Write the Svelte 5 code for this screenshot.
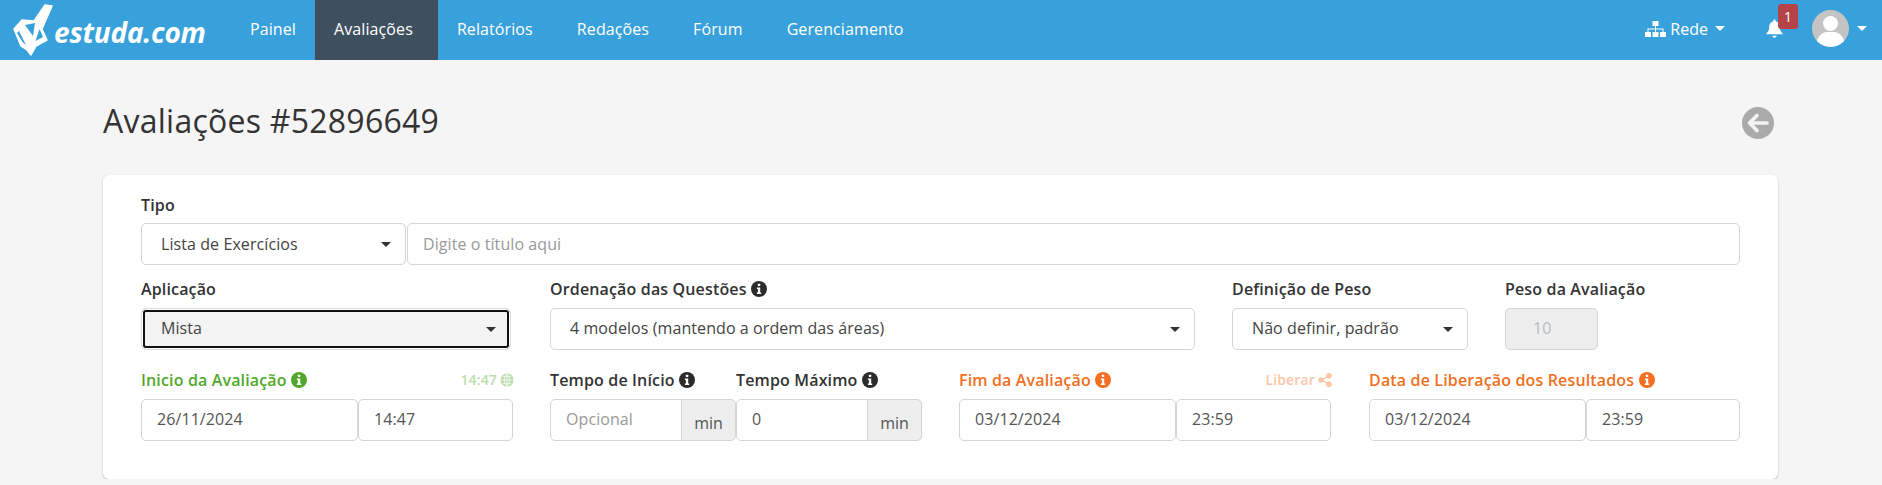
<script>
	const nav = ['Painel', 'Avaliações', 'Relatórios', 'Redações', 'Fórum', 'Gerenciamento'];
	const active = 'Avaliações';
</script>

{#snippet info(color)}
	<svg class="info" viewBox="0 0 16 16" style="color: {color}">
		<circle cx="8" cy="8" r="8" fill="currentColor" />
		<rect x="6.9" y="2.8" width="2.3" height="2.3" rx="0.4" fill="#fff" />
		<path d="M5.9 6.5h3.3v5h1v1.6H5.900v-1.600h1v-3.400h-1z" fill="#fff" />
	</svg>
{/snippet}

{#snippet caret()}
	<span class="caret"></span>
{/snippet}

<header class="navbar">
	<div class="logo">
		<svg class="logo-mark" viewBox="0 0 54 56" width="54" height="56">
			<path
				d="M14 27 L22 18 L34 19 L45 3 L52 4 L42 27 L47 38 L36 44 L31 53 L27 48 L21 44 Z"
				fill="#fff"
				stroke="#fff"
				stroke-width="1.500"
				stroke-linejoin="round"
			/>
			<path d="M25 23 L35 21 L33 34 Z" fill="#38a1db" />
			<path d="M19 29 L26 43 L22.500 40 L17 31 Z" fill="#38a1db" />
			<path d="M35.500 39 L43 35 L39.500 27 Z" fill="#38a1db" />
		</svg>
		<span class="logo-text">estuda.com</span>
	</div>
	<nav class="menu">
		{#each nav as item}
			<a href="#top" class:active={item === active}>{item}</a>
		{/each}
	</nav>
	<div class="nav-right">
		<div class="rede">
			<svg viewBox="0 0 21 16" width="21" height="16" fill="#fff">
				<rect x="7.5" y="0" width="6" height="5" />
				<rect x="0" y="11" width="6" height="5" />
				<rect x="7.5" y="11" width="6" height="5" />
				<rect x="15" y="11" width="6" height="5" />
				<path d="M10 5h1v2.500h7.500V11h-1V8.500H11V11h-1V8.500H3.500V11h-1V7.500H10z" />
			</svg>
			<span>Rede</span>
			{@render caret()}
		</div>
		<div class="bell">
			<svg viewBox="0 0 16 18" width="17" height="19" fill="#fff">
				<path d="M8 0.5c.6 0 1 .4 1 1v.6c2.600.5 4 2.600 4 5 0 3.600 1 5 2.500 6.400v1H.5v-1C2 12.100 3 10.700 3 7.100c0-2.400 1.400-4.500 4-5v-.6c0-.6.4-1 1-1z" />
				<path d="M6 15.800h4c0 1.100-.9 1.900-2 1.900s-2-.8-2-1.900z" />
			</svg>
			<span class="badge">1</span>
		</div>
		<div class="user">
			<span class="avatar">
				<svg viewBox="0 0 37 37" width="37" height="37">
					<circle cx="18.500" cy="13.500" r="7.500" fill="#fff" />
					<path d="M4 37c0-9 5-14 10-15h9c5 1 10 6 10 15z" fill="#fff" />
				</svg>
			</span>
			{@render caret()}
		</div>
	</div>
</header>

<main class="page">
	<div class="title-row">
		<h1>Avaliações #52896649</h1>
		<span class="back">
			<svg viewBox="0 0 32 32" width="32" height="32">
				<circle cx="16" cy="16" r="16" fill="#aaa" />
				<path d="M15 8.500 L7.500 16 L15 23.500 M8.500 16 H25" fill="none" stroke="#f4f4f4" stroke-width="3.600" stroke-linecap="round" stroke-linejoin="round" />
			</svg>
		</span>
	</div>

	<section class="card">
		<label class="lbl" for="titulo">Tipo</label>
		<div class="row joined">
			<div class="control select tipo">Lista de Exercícios</div>
			<input id="titulo" class="control grow" placeholder="Digite o título aqui" />
		</div>

		<div class="row fields second">
			<div class="f-aplic">
				<div class="lbl">Aplicação</div>
				<div class="control select focused">Mista</div>
			</div>
			<div class="f-ordem">
				<div class="lbl">Ordenação das Questões {@render info('#2b2b2b')}</div>
				<div class="control select">4 modelos (mantendo a ordem das áreas)</div>
			</div>
			<div class="f-def">
				<div class="lbl">Definição de Peso</div>
				<div class="control select">Não definir, padrão</div>
			</div>
			<div class="f-peso">
				<div class="lbl nowrap">Peso da Avaliação</div>
				<div class="control disabled">10</div>
			</div>
		</div>

		<div class="row fields third">
			<div class="f-date">
				<div class="lbl green spread">
					<span>Inicio da Avaliação {@render info('#53a82c')}</span>
					<span class="hint green-hint">
						14:47
						<svg viewBox="0 0 16 16" width="14" height="14">
							<circle cx="8" cy="8" r="7.500" fill="currentColor" />
							<path d="M1 8h14M8 1v14M3 3.800h10M3 12.200h10M8 1c-4 3.500-4 10.500 0 14M8 1c4 3.500 4 10.500 0 14" fill="none" stroke="#fff" stroke-width="0.800" />
						</svg>
					</span>
				</div>
				<div class="joined">
					<div class="control date">26/11/2024</div>
					<div class="control grow">14:47</div>
				</div>
			</div>
			<div class="f-tempos">
				<div class="f-tempo">
					<div class="lbl">Tempo de Início {@render info('#2b2b2b')}</div>
					<div class="joined">
						<div class="control grow placeholder">Opcional</div>
						<div class="addon">min</div>
					</div>
				</div>
				<div class="f-tempo">
					<div class="lbl">Tempo Máximo {@render info('#2b2b2b')}</div>
					<div class="joined">
						<div class="control grow">0</div>
						<div class="addon">min</div>
					</div>
				</div>
			</div>
			<div class="f-date f-mid">
				<div class="lbl orange spread">
					<span>Fim da Avaliação {@render info('#f26f21')}</span>
					<span class="hint orange-hint">
						Liberar
						<svg viewBox="0 0 14 14" width="14" height="14" fill="currentColor">
							<circle cx="11" cy="2.800" r="2.800" />
							<circle cx="3" cy="7" r="2.800" />
							<circle cx="11" cy="11.200" r="2.800" />
							<path d="M3 7 L11 2.800 M3 7 L11 11.200" stroke="currentColor" stroke-width="1.400" />
						</svg>
					</span>
				</div>
				<div class="joined">
					<div class="control date">03/12/2024</div>
					<div class="control grow">23:59</div>
				</div>
			</div>
			<div class="f-date f-last">
				<div class="lbl orange">Data de Liberação dos Resultados {@render info('#f26f21')}</div>
				<div class="joined">
					<div class="control date">03/12/2024</div>
					<div class="control grow">23:59</div>
				</div>
			</div>
		</div>
	</section>
</main>

<style>
	:global(body) {
		margin: 0;
		background: #f5f5f5;
		font-family: 'Open Sans', sans-serif;
		color: #333;
		overflow: hidden;
	}

	.navbar {
		display: flex;
		align-items: stretch;
		height: 60px;
		background: #38a1db;
		color: #fff;
	}

	.logo {
		display: flex;
		align-items: center;
		width: 231px;
		box-sizing: border-box;
	}

	.logo-mark {
		flex: none;
	}

	.logo-text {
		margin-top: 3px;
		font-size: 28px;
		font-weight: 700;
		font-style: italic;
		letter-spacing: -0.2px;
	}

	.menu {
		display: flex;
	}

	.menu a {
		display: flex;
		align-items: center;
		padding: 0 25px 3px 19px;
		color: #fff;
		font-size: 16px;
		letter-spacing: 0.1px;
		text-decoration: none;
	}

	.menu a:first-child {
		padding-right: 19px;
	}

	.menu a.active {
		background: #3e5060;
	}

	.nav-right {
		margin-left: auto;
		display: flex;
		align-items: center;
		padding: 0 15px 3px 0;
	}

	.rede {
		display: flex;
		align-items: center;
		gap: 4px;
		font-size: 16px;
	}

	.caret {
		display: inline-block;
		width: 0;
		height: 0;
		margin-left: 3px;
		border-left: 5px solid transparent;
		border-right: 5px solid transparent;
		border-top: 5px solid currentColor;
	}

	.bell {
		position: relative;
		margin-left: 41px;
		display: flex;
		height: 19px;
	}

	.badge {
		position: absolute;
		left: 12px;
		top: -15px;
		width: 20px;
		height: 25px;
		background: #b54347;
		border-radius: 3px;
		font-size: 14px;
		line-height: 25px;
		text-align: center;
	}

	.user {
		display: flex;
		align-items: center;
		gap: 5px;
		margin-left: 29px;
	}

	.avatar {
		display: block;
		width: 37px;
		height: 37px;
		border-radius: 50%;
		overflow: hidden;
		background: #c4c4c4;
	}

	.avatar svg {
		display: block;
	}

	.page {
		padding: 0 104px 0 103px;
	}

	.title-row {
		display: flex;
		justify-content: space-between;
		align-items: center;
		height: 115px;
	}

	h1 {
		margin: 5px 0 0;
		font-size: 32px;
		font-weight: 400;
		color: #333;
		letter-spacing: 0.25px;
	}

	.back {
		display: flex;
		margin-right: 4px;
		margin-top: 11px;
	}

	.card {
		background: #fff;
		border-radius: 6px;
		box-shadow: 0 1px 2px rgba(0, 0, 0, 0.25);
		padding: 19px 38px 0;
		height: 304px;
		box-sizing: border-box;
	}

	.lbl {
		display: block;
		margin-bottom: 7px;
		font-size: 16px;
		line-height: 22px;
		font-weight: 600;
		color: #333;
		letter-spacing: 0.15px;
	}

	.fields .lbl {
		margin-bottom: 8px;
	}

	.nowrap {
		white-space: nowrap;
	}

	.green {
		color: #53a82c;
	}

	.orange {
		color: #f26f21;
	}

	.spread {
		display: flex;
		justify-content: space-between;
	}

	.hint {
		display: inline-flex;
		align-items: center;
		gap: 3px;
		font-size: 14px;
		margin-right: -1px;
		margin-top: -1px;
	}

	.green-hint {
		color: #bbdcab;
	}

	.orange-hint {
		color: #fbc6a6;
	}

	.info {
		width: 16px;
		height: 16px;
		vertical-align: -2px;
	}

	.row {
		display: flex;
	}

	.joined {
		display: flex;
	}

	.control {
		box-sizing: border-box;
		height: 42px;
		padding: 0 15px;
		border: 1px solid #d5d5d5;
		border-radius: 5px;
		background: #fff;
		font: 16px/40px 'Open Sans', sans-serif;
		color: #555;
		letter-spacing: 0.08px;
		outline: none;
		min-width: 0;
	}

	.fields .control {
		line-height: 38px;
	}

	.control::placeholder,
	.placeholder {
		color: #999;
		opacity: 1;
	}

	.grow {
		flex: 1;
	}

	.select {
		position: relative;
		padding-left: 19px;
		color: #444;
	}

	.select::after {
		content: '';
		position: absolute;
		right: 14px;
		top: 18px;
		border-left: 5px solid transparent;
		border-right: 5px solid transparent;
		border-top: 5px solid #333;
	}

	.tipo {
		width: 265px;
		margin-right: 1px;
		flex: none;
	}

	.focused {
		background: #f3f3f3;
		border-color: #ddd;
		box-shadow:
			inset 0 0 0 1px #fff,
			inset 0 0 0 3px #111;
	}

	.disabled {
		background: #eee;
		color: #bbb;
		padding-left: 27px;
	}

	.addon {
		box-sizing: border-box;
		width: 55px;
		height: 42px;
		padding-top: 5px;
		border: 1px solid #d5d5d5;
		border-radius: 0 5px 5px 0;
		background: #eee;
		font-size: 16px;
		line-height: 36px;
		color: #555;
		text-align: center;
		margin-left: -5px;
		position: relative;
	}

	.second {
		margin-top: 13px;
	}

	.f-aplic {
		width: 370px;
		margin-right: 39px;
	}

	.f-ordem {
		width: 645px;
		margin-right: 37px;
	}

	.f-def {
		width: 236px;
		margin-right: 37px;
	}

	.f-peso {
		width: 93px;
	}

	.third {
		margin-top: 19px;
	}

	.f-date {
		width: 372px;
		margin-right: 37px;
	}

	.f-mid {
		margin-right: 38px;
	}

	.f-last {
		width: 371px;
		margin-right: 0;
	}

	.f-date .date {
		width: 217px;
		flex: none;
	}

	.f-tempos {
		display: flex;
		width: 372px;
		margin-right: 37px;
	}

	.f-tempo {
		width: 186px;
	}
</style>
